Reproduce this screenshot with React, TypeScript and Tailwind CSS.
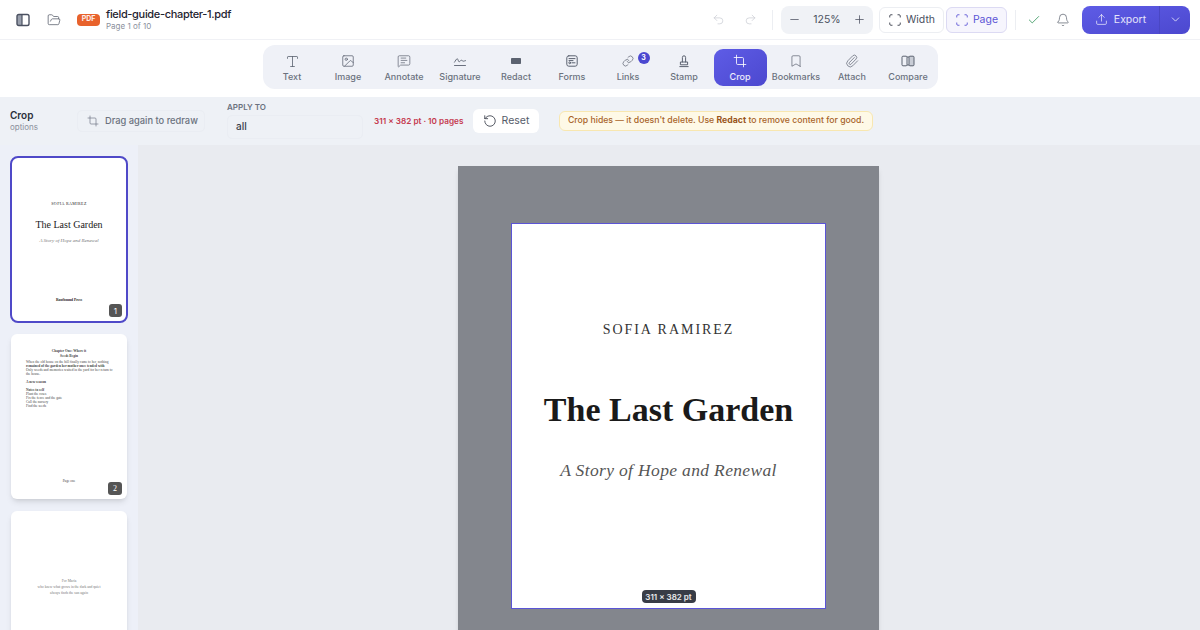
import { Undo2, Redo2, Minus, Plus, Scan, Check, Bell, Upload, ChevronDown, Type, Image, MessageSquareText, Link, Crop, Bookmark, Paperclip, FolderOpen, RotateCcw } from 'lucide-react'
import type { ReactNode } from 'react'

const sans = "font-['Inter','Noto_Sans',sans-serif]"
const serif = "font-['Liberation_Serif',serif]"

function PanelIcon() {
  return (
    <svg width="14" height="14" viewBox="0 0 14 14" fill="none">
      <rect x="1" y="1.5" width="5" height="11" fill="#9aa0ad" />
      <rect x="1" y="1.5" width="12" height="11" rx="1.8" stroke="#4b5161" strokeWidth="1.4" />
      <path d="M6 1.5v11" stroke="#4b5161" strokeWidth="1.2" />
    </svg>
  )
}

function SignatureIcon() {
  return (
    <svg width="14" height="14" viewBox="0 0 14 14" fill="none" stroke="#5b6270" strokeWidth="0.9" strokeLinecap="round" strokeLinejoin="round">
      <path d="M1.5 8.2c1-1.4 1.8-3.4 2.8-3.4s.8 3 1.8 3 1.3-1.6 2.2-1.6 1 1 2 1 1.4-.5 2.2-.6" />
      <path d="M1.5 11.5h11" />
    </svg>
  )
}

function RedactIcon() {
  return (
    <svg width="14" height="14" viewBox="0 0 14 14">
      <rect x="2" y="4" width="10" height="6" rx="0.8" fill="#5b6270" />
    </svg>
  )
}

function FormsIcon() {
  return (
    <svg width="14" height="14" viewBox="0 0 14 14" fill="none" stroke="#5b6270" strokeWidth="1" strokeLinecap="round">
      <rect x="1.8" y="1.8" width="10.4" height="10.4" rx="2" />
      <path d="M4 4.6h6" />
      <circle cx="4.7" cy="8.8" r="0.9" />
      <path d="M7 8.8h3" />
      <path d="M4 6.6h4" />
    </svg>
  )
}

function StampIcon() {
  return (
    <svg width="14" height="14" viewBox="0 0 14 14" fill="none" stroke="#5b6270" strokeWidth="1" strokeLinecap="round" strokeLinejoin="round">
      <path d="M5.4 8V3.4a1.6 1.6 0 0 1 3.2 0V8" />
      <path d="M3.4 10.4V8h7.2v2.4z" />
      <path d="M2.8 12.6h8.4" />
    </svg>
  )
}

function CompareIcon() {
  return (
    <svg width="14" height="14" viewBox="0 0 14 14" fill="none" stroke="#5b6270" strokeWidth="1">
      <rect x="1" y="2.2" width="5" height="9.6" rx="1" />
      <rect x="8" y="2.2" width="5" height="9.6" rx="1" fill="#c9cdd6" />
      <path d="M6 3h2M6 11h2" />
    </svg>
  )
}

const tools: { label: string; icon: ReactNode; badge?: string; active?: boolean }[] = [
  { label: 'Text', icon: <Type size={15} strokeWidth={1.3} /> },
  { label: 'Image', icon: <Image size={14} strokeWidth={1.3} /> },
  { label: 'Annotate', icon: <MessageSquareText size={14} strokeWidth={1.2} /> },
  { label: 'Signature', icon: <SignatureIcon /> },
  { label: 'Redact', icon: <RedactIcon /> },
  { label: 'Forms', icon: <FormsIcon /> },
  { label: 'Links', icon: <Link size={12} strokeWidth={1.4} />, badge: '3' },
  { label: 'Stamp', icon: <StampIcon /> },
  { label: 'Crop', icon: <Crop size={14} strokeWidth={1.4} />, active: true },
  { label: 'Bookmarks', icon: <Bookmark size={14} strokeWidth={1.2} /> },
  { label: 'Attach', icon: <Paperclip size={14} strokeWidth={1.2} /> },
  { label: 'Compare', icon: <CompareIcon /> },
]

function TopBar() {
  return (
    <header className="flex h-[40px] items-center border-b border-[#f0f1f5] bg-white pr-[10px] pl-4">
      <PanelIcon />
      <FolderOpen size={14} strokeWidth={1.3} className="ml-[17px] text-[#555b69]" />
      <span className="ml-[16px] flex h-[12px] w-[23px] items-center justify-center rounded-[4px] bg-[#e8622c] text-[7px] font-bold text-white/90">PDF</span>
      <div className="ml-[6px] flex flex-col">
        <span className="text-[11px] leading-[14px] font-medium tracking-[-0.03em] text-[#1f2430]">field-guide-chapter-1.pdf</span>
        <span className="text-[8px] leading-[11px] text-[#8b909c]">Page 1 of 10</span>
      </div>
      <div className="ml-auto flex items-center">
        <Undo2 size={13} strokeWidth={1.2} className="text-[#c4c7cf]" />
        <Redo2 size={13} strokeWidth={1.2} className="ml-[19px] text-[#c4c7cf]" />
        <div className="mr-[8px] ml-[15px] h-[20px] w-px bg-[#eceef2]" />
        <div className="flex h-[28px] w-[92px] items-center justify-between rounded-[8px] bg-[#f0f2f6] px-[7px] text-[#4b5161]">
          <Minus size={13} strokeWidth={1.4} />
          <span className="text-[10.5px] font-normal">125%</span>
          <Plus size={13} strokeWidth={1.4} />
        </div>
        <button className="ml-[6px] flex h-[26px] w-[65px] items-center justify-center gap-[4px] rounded-[6px] border border-[#eceef2] bg-white text-[10.5px] text-[#4b5161]">
          <Scan size={14} strokeWidth={1.5} className="text-[#333845]" />
          Width
        </button>
        <button className="ml-[2px] flex h-[26px] w-[61px] items-center justify-center gap-[4px] rounded-[6px] border border-[#dcdaf3] bg-[#f6f5fd] text-[10.5px] text-[#5b54d6]">
          <Scan size={14} strokeWidth={1.5} />
          Page
        </button>
        <div className="mr-[11px] ml-[8px] h-[20px] w-px bg-[#eceef2]" />
        <Check size={14} strokeWidth={1.5} className="text-[#3f9a63]" />
        <Bell size={14} strokeWidth={1.2} className="ml-[15px] text-[#555b69]" />
        <div className="ml-[12px] flex h-[28px] w-[108px] items-center rounded-[8px] bg-linear-to-br from-[#5e5ce6] to-[#4c48cf] text-white">
          <div className="flex h-full w-[77px] items-center justify-center gap-[6px] text-[10.5px] text-white/85">
            <Upload size={13} strokeWidth={1.4} />
            Export
          </div>
          <div className="flex h-full flex-1 items-center justify-center border-l border-[#4a47c4]">
            <ChevronDown size={13} strokeWidth={1.5} className="text-white/90" />
          </div>
        </div>
      </div>
    </header>
  )
}

function ToolRow() {
  return (
    <div className="flex h-[57px] items-start justify-center bg-white pt-[5px]">
      <div className="flex h-[44px] w-[675px] items-center justify-center rounded-[12px] bg-[#eff1f7]">
        {tools.map((t) => (
          <div key={t.label} className="flex w-[56px] justify-center">
            <div className={`relative mt-px flex h-[37px] w-[53px] flex-col items-center justify-center rounded-[9px] ${t.active ? 'bg-linear-to-br from-[#5e5ce6] to-[#4c48cf] text-white' : 'text-[#5b6270]'}`}>
              <div className="flex h-[15px] items-center">{t.icon}</div>
              <span className={`mt-[2px] text-[9px] leading-[11px] font-medium whitespace-nowrap ${t.active ? 'text-white/90' : 'text-[#6b717e]'}`}>{t.label}</span>
              {t.badge && (
                <span className="absolute top-[3px] right-[5px] flex h-[12px] w-[12px] items-center justify-center rounded-full bg-[#4b48d0] text-[7px] font-bold text-white">{t.badge}</span>
              )}
            </div>
          </div>
        ))}
      </div>
    </div>
  )
}

function OptionsBar() {
  return (
    <div className="flex h-[48px] items-center bg-[#eef1f6] pl-[10px]">
      <div className="flex w-[67px] flex-col">
        <span className="text-[10px] leading-[13px] font-semibold text-[#2a2f3a]">Crop</span>
        <span className="text-[8px] leading-[11px] text-[#8b909c]">options</span>
      </div>
      <div className="flex h-[22px] w-[128px] items-center gap-[6px] rounded-[5px] border border-[#eaedf3] pl-[9px] text-[9.3px] font-medium whitespace-nowrap text-[#6b717e]">
        <Crop size={12} strokeWidth={1.3} />
        Drag again to redraw
      </div>
      <div className="-mt-[2px] ml-[22px] flex w-[136px] flex-col">
        <span className="text-[8px] leading-[11px] font-semibold text-[#6b717e]">APPLY TO</span>
        <div className="mt-[2px] flex h-[24px] items-center rounded-[5px] border border-[#eaedf3] pl-[8px] text-[10px] font-medium text-[#3a3f4b]">all</div>
      </div>
      <span className="ml-[11px] w-[89px] text-[8.2px] font-semibold whitespace-nowrap text-[#c53a4e]">311 × 382 pt · 10 pages</span>
      <button className="ml-[10px] flex h-[24px] w-[66px] items-center justify-center gap-[5px] rounded-[6px] bg-white text-[10.5px] text-[#555b69]">
        <RotateCcw size={14} strokeWidth={1.4} className="text-[#333845]" />
        Reset
      </button>
      <div className="ml-[20px] flex h-[20px] w-[314px] items-center justify-center rounded-[6px] border border-[#f8e7b0] bg-[#fef9e7] text-[8.7px] font-medium whitespace-nowrap text-[#a8642a]">
        <span>Crop hides — it doesn't delete. Use <b className="font-bold text-[#99551c]">Redact</b> to remove content for good.</span>
      </div>
    </div>
  )
}

function Sidebar() {
  return (
    <aside className="flex h-full w-[138px] shrink-0 flex-col items-center bg-[#edf0f8] pt-[11px]">
      <div className="relative flex h-[167px] w-[118px] shrink-0 flex-col items-center rounded-[8px] border-2 border-[#4f49c8] bg-white text-[#222]">
        <span className={`${serif} mt-[43px] text-[4px] leading-[5px] tracking-[0.1em]`}>SOFIA RAMIREZ</span>
        <span className={`${serif} mt-[13px] text-[10px] leading-[12px] text-[#222]`}>The Last Garden</span>
        <span className={`${serif} mt-[7px] text-[5px] leading-[5px] text-[#777] italic`}>A Story of Hope and Renewal</span>
        <span className={`${serif} mt-[55px] text-[3.6px] leading-[5px] font-bold`}>Rootbound Press</span>
        <span className="absolute right-[4px] bottom-[4px] flex h-[13px] w-[13px] items-center justify-center rounded-[3px] bg-[#555] text-[8px] text-white">1</span>
      </div>
      <div className={`${serif} relative mt-[11px] h-[165px] w-[116px] shrink-0 rounded-[6px] bg-white px-[15px] pt-[15px] text-[3.5px] leading-[4px] text-[#444] shadow-md`}>
        <div className="text-center font-bold">Chapter One: Where it</div>
        <div className="mt-px text-center font-bold">Seeds Begin</div>
        <div className="mt-[2px] whitespace-nowrap">When the old house on the hill finally came to her, nothing</div>
        <div className="font-bold whitespace-nowrap">remained of the garden her mother once tended with</div>
        <div className="whitespace-nowrap">Only weeds and memories waited in the yard for her return to</div>
        <div>the house.</div>
        <div className="mt-[4px] font-bold">A new season</div>
        <div className="mt-[4px] font-bold">Notes to self</div>
        <div>Plant the roses</div>
        <div>Fix the fence and the gate</div>
        <div>Call the nursery</div>
        <div>Find the seeds</div>
        <div className="absolute bottom-[16px] left-0 w-full text-center">Page one</div>
        <span className="absolute right-[5px] bottom-[4px] flex h-[13px] w-[14px] items-center justify-center rounded-[3px] bg-[#555] text-[8px] text-white">2</span>
      </div>
      <div className={`${serif} mt-[12px] flex h-[165px] w-[116px] shrink-0 flex-col items-center rounded-[6px] bg-white pt-[67px] text-[3.6px] leading-[6px] text-[#777] shadow-md`}>
        <span>For Maria</span>
        <span>who knew what grows in the dark and quiet</span>
        <span>always finds the sun again</span>
      </div>
    </aside>
  )
}

function PageView() {
  return (
    <main className="flex h-full flex-1 justify-center bg-[#e9ebf0] pt-[21px] pr-px">
      <div className="h-[600px] w-[421px] bg-[#83868d] pt-[57px] pl-[53px] shadow-md">
        <div className="relative flex h-[386px] w-[315px] flex-col items-center border border-[#5b54d6] bg-white">
          <span className={`${serif} mt-[97px] text-[14px] leading-[18px] tracking-[0.14em] text-[#333]`}>SOFIA RAMIREZ</span>
          <span className={`${serif} mt-[48px] text-[34px] leading-[46px] font-bold text-[#1a1a1a]`}>The Last Garden</span>
          <span className={`${serif} mt-[26px] text-[17.5px] leading-[22px] tracking-[0.02em] text-[#555] italic`}>A Story of Hope and Renewal</span>
          <span className="absolute bottom-[5px] left-1/2 flex h-[13px] w-[54px] -translate-x-1/2 items-center justify-center rounded-[4px] bg-[#383c46] text-[8px] font-semibold whitespace-nowrap text-white/90">311 × 382 pt</span>
        </div>
      </div>
    </main>
  )
}

export default function App() {
  return (
    <div className={`${sans} flex h-[630px] w-[1200px] flex-col overflow-hidden`}>
      <TopBar />
      <ToolRow />
      <OptionsBar />
      <div className="flex min-h-0 flex-1">
        <Sidebar />
        <PageView />
      </div>
    </div>
  )
}
